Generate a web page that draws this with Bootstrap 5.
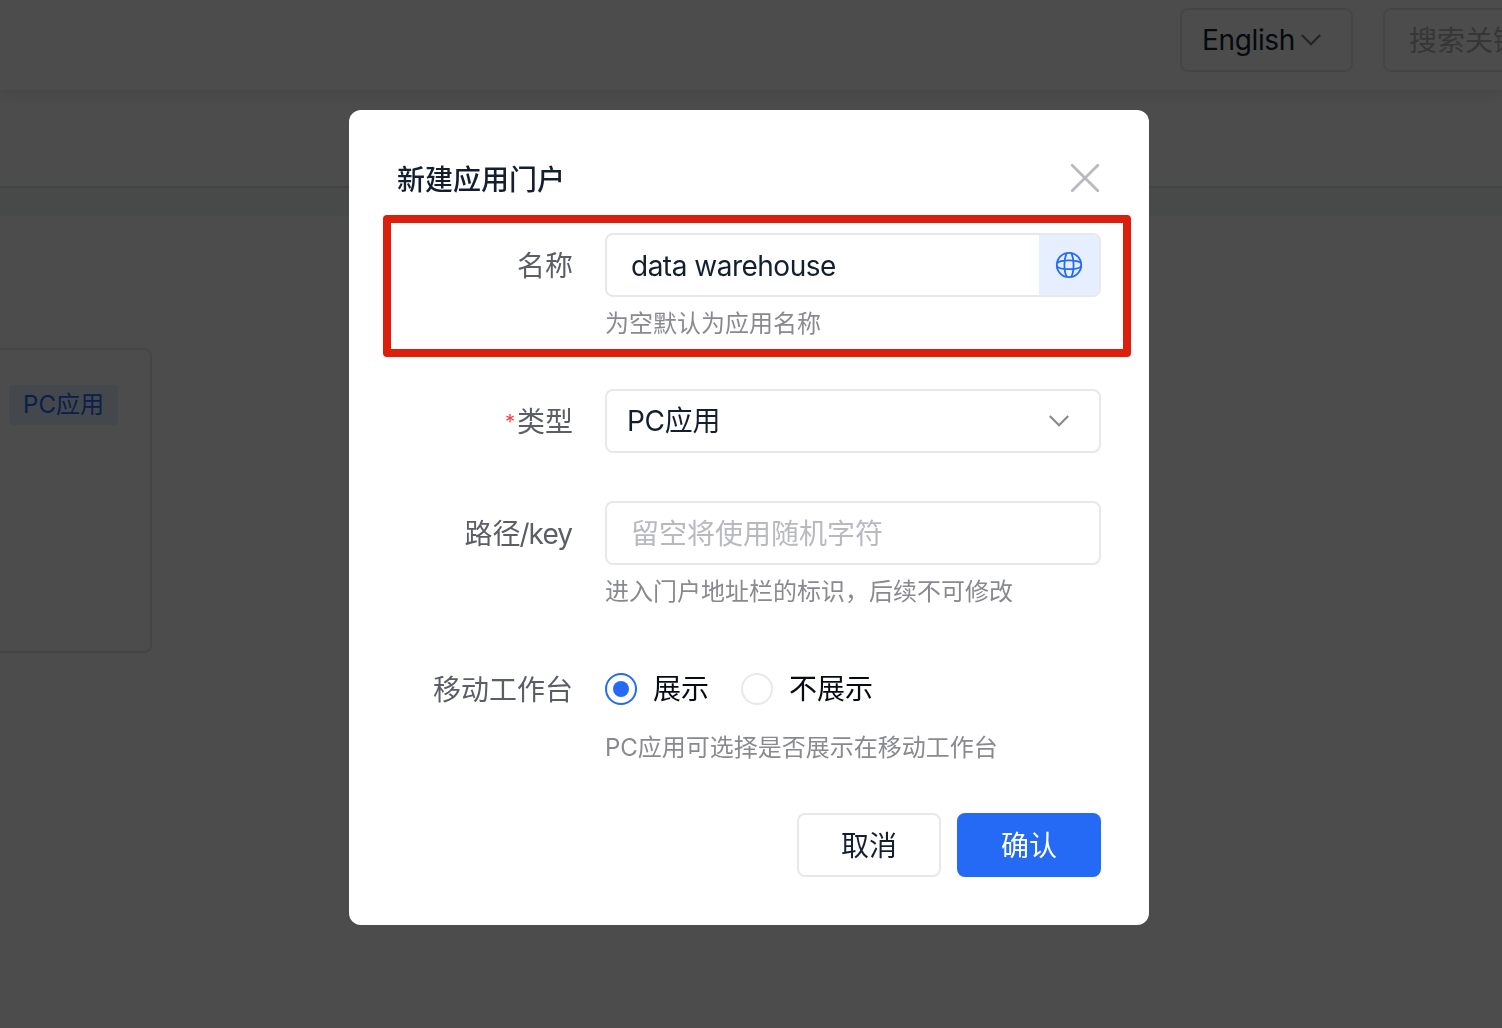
<!DOCTYPE html>
<html lang="zh-CN">
<head>
<meta charset="utf-8">
<meta name="viewport" content="width=device-width, initial-scale=1">
<title>新建应用门户</title>
<link href="https://cdn.jsdelivr.net/npm/bootstrap@5.3.0/dist/css/bootstrap.min.css" rel="stylesheet">
<style>
  body { font-family: Inter, "Noto Sans CJK SC", sans-serif; font-size: 28px; line-height: 40px; color: #141e31; background: #fff; height: 1028px; overflow: hidden; }
  .topbar { height: 90px; padding: 8px 0 0 1180px; gap: 30px; box-shadow: 0 2px 16px rgba(0,0,0,.14); position: relative; background: #fff; }
  .ctl { height: 64px; border: 2px solid #e8e8ea; border-radius: 8px; background: #fff; }
  .lang { width: 173px; padding: 0 20px; gap: 6px; letter-spacing: -.35px; }
  .search { width: 119px; padding: 1px 0 0 24px; border-right: 0; border-radius: 8px 0 0 8px; color: #b5b6ba; }
  .tabbar { height: 98px; border-bottom: 2px solid #e2e4e4; }
  .strip { height: 28px; background: #f2f9f7; }
  .appcard { width: 152px; height: 305px; margin-top: 132px; border: 2px solid #e8e8ea; border-left: 0; border-radius: 0 8px 8px 0; padding: 35px 32px 0 0; }
  .apptag { width: 109px; height: 40px; background: #e5efff; color: #256af4; border-radius: 4px; font-size: 24px; }
  .modal-backdrop { --bs-backdrop-opacity: .7; }
  .modal { padding-right: 4px; overflow: hidden; }
  .modal-dialog { width: 800px; max-width: 800px; margin: 110px auto 0; }
  .modal-content { height: 815px; padding: 48px; border: 0; border-radius: 12px; color: #141e31; }
  .head { height: 75px; }
  .head h1 { font-size: 28px; line-height: 44px; font-weight: 500; }
  .head svg { margin: 4px 0 0; }
  .item { height: 156px; }
  .item.short { height: 112px; }
  .lab { width: 208px; height: 64px; padding: 2px 32px 0 0; color: #5b5e66; }
  .latin { letter-spacing: -.95px; margin-right: 1px; margin-left: -1px; }
  .star { color: #f53f3f; font-size: 20px; margin-right: 2px; }
  .fields { width: 496px; }
  .hint { font-size: 24px; line-height: 36px; margin-top: 9px; color: #898a8f; white-space: nowrap; }
  .ctl input { border: 0; outline: 0; background: transparent; padding: 2px 0 0 24px; color: #141e31; min-width: 0; }
  .ctl .named { letter-spacing: -.5px; }
  .ctl input::placeholder { color: #b9babf; opacity: 1; }
  .globe { width: 60px; background: #e5efff; }
  .pick { padding: 0 30px 0 20px; }
  .pick span { letter-spacing: -.3px; }
  .choices { height: 64px; color: #050a14; }
  .dot { width: 32px; height: 32px; border: 2px solid #e8e8ea; border-radius: 50%; margin-right: 16px; }
  .dot.off { margin-left: 32px; }
  .dot.on { border-color: #256af4; }
  .dot.on::after { content: ""; width: 16px; height: 16px; border-radius: 50%; background: #256af4; }
  .act { width: 144px; height: 64px; padding: 2px 0 0; border: 2px solid #e8e8ea; border-radius: 8px; font-size: 28px; color: #141e31; background: #fff; }
  .act.ok { background: #256af4; border-color: #256af4; color: #fff; }
  .frame { left: 34px; top: 105.400px; width: 748px; height: 142px; border: 8px solid #dc1f0c; border-radius: 4px; pointer-events: none; }
</style>
<script src="https://cdn.jsdelivr.net/npm/bootstrap@5.3.0/dist/js/bootstrap.bundle.min.js"></script>
</head>
<body>
<header class="topbar d-flex align-items-start">
  <div class="ctl lang d-flex align-items-center flex-shrink-0"><span>English</span>
    <svg width="20" height="12" viewBox="0 0 20 12" fill="none" stroke="#77787d" stroke-width="2.200"><path d="M.8 1 10 10.300 19.200 1"/></svg>
  </div>
  <div class="ctl search d-flex align-items-center flex-shrink-0 text-nowrap overflow-hidden">搜索关键</div>
</header>
<nav class="tabbar"></nav>
<div class="strip"></div>
<main><section class="appcard d-flex justify-content-end align-items-start"><span class="apptag d-flex align-items-center justify-content-center text-nowrap flex-shrink-0">PC应用</span></section></main>

<div class="modal-backdrop show"></div>
<div class="modal d-block" tabindex="-1">
  <div class="modal-dialog">
    <div class="modal-content">
      <div class="head d-flex justify-content-between align-items-start">
        <h1 class="m-0">新建应用门户</h1>
        <svg width="32" height="32" viewBox="0 0 32 32" fill="none" stroke="#b9babf" stroke-width="2.800" stroke-linecap="round"><path d="M3.200 3.200 28.800 28.800M28.800 3.200 3.200 28.800"/></svg>
      </div>
      <div class="item d-flex">
        <label class="lab d-flex align-items-center justify-content-end">名称</label>
        <div class="fields">
          <div class="ctl d-flex overflow-hidden">
            <input class="named flex-grow-1" value="data warehouse">
            <span class="globe d-flex align-items-center justify-content-center flex-shrink-0">
              <svg width="28" height="28" viewBox="0 0 28 28" fill="none" stroke="#256af4" stroke-width="1.800"><circle cx="14" cy="14" r="12.200"/><path d="M11.800 1.900C8.600 8 8.600 20 11.800 26.100M16.200 1.900C19.400 8 19.400 20 16.200 26.100M1.900 12.200C5 8.400 23 8.400 26.100 12.200M1.900 15.200C5 19.200 23 19.200 26.100 15.200"/></svg>
            </span>
          </div>
          <div class="hint">为空默认为应用名称</div>
        </div>
      </div>
      <div class="item short d-flex">
        <label class="lab d-flex align-items-center justify-content-end"><span class="star">*</span>类型</label>
        <div class="fields">
          <div class="ctl pick d-flex align-items-center justify-content-between"><span>PC应用</span>
            <svg width="20" height="12" viewBox="0 0 20 12" fill="none" stroke="#898a8f" stroke-width="2.200"><path d="M.8 1 10 10.300 19.200 1"/></svg>
          </div>
        </div>
      </div>
      <div class="item d-flex">
        <label class="lab d-flex align-items-center justify-content-end">路径<span class="latin">/key</span></label>
        <div class="fields">
          <div class="ctl d-flex"><input class="flex-grow-1" placeholder="留空将使用随机字符"></div>
          <div class="hint">进入门户地址栏的标识，后续不可修改</div>
        </div>
      </div>
      <div class="item d-flex">
        <label class="lab d-flex align-items-center justify-content-end">移动工作台</label>
        <div class="fields">
          <div class="choices d-flex align-items-center">
            <span class="dot on d-flex align-items-center justify-content-center"></span><span>展示</span>
            <span class="dot off"></span><span>不展示</span>
          </div>
          <div class="hint">PC应用可选择是否展示在移动工作台</div>
        </div>
      </div>
      <div class="d-flex justify-content-end gap-3">
        <button class="btn act">取消</button>
        <button class="btn act ok">确认</button>
      </div>
      <div class="frame position-absolute"></div>
    </div>
  </div>
</div>
</body>
</html>
